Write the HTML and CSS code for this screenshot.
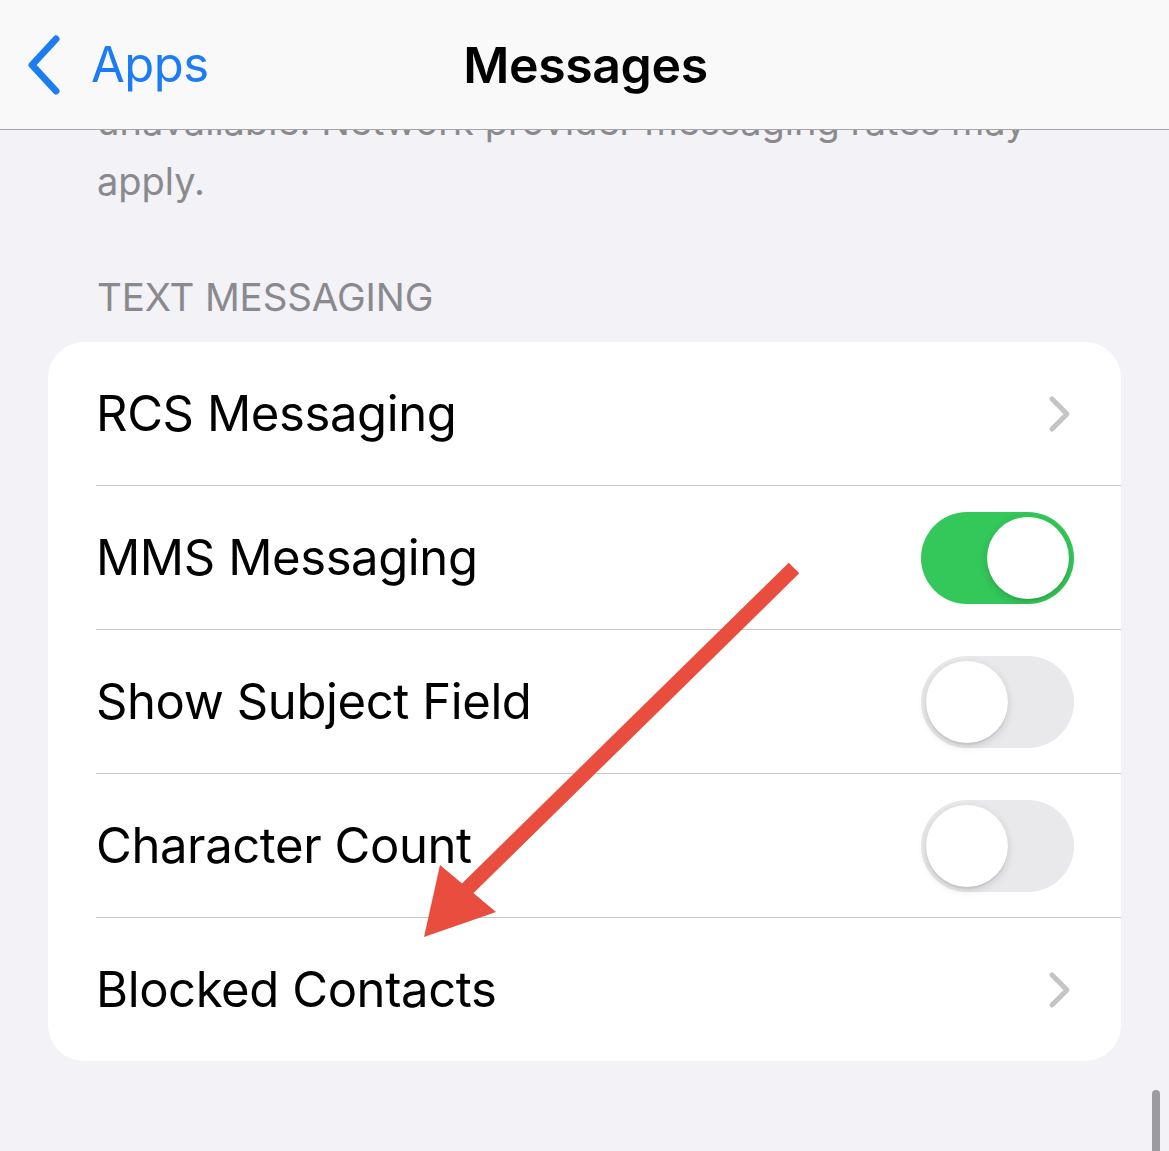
FILE: index.html
```html
<!DOCTYPE html>
<html>
<head>
<meta charset="utf-8">
<link rel="stylesheet" href="styles.css">
</head>
<body>
<div class="screen">
  <header class="navbar">
    <div class="back">
      <svg class="back-chevron" viewBox="0 0 40 60" width="40" height="60"><path d="M32 4 L8 30 L32 56" fill="none" stroke="#1b7cf3" stroke-width="7" stroke-linecap="round" stroke-linejoin="round"/></svg>
      <span class="back-label">Apps</span>
    </div>
    <div class="title">Messages</div>
    <div class="nav-spacer"></div>
  </header>
  <main class="content">
    <p class="footnote">unavailable. Network provider messaging rates may apply.</p>
    <div class="section-header">TEXT MESSAGING</div>
    <div class="card">
      <div class="row"><div class="row-inner"><span class="label">RCS Messaging</span><svg class="chev" viewBox="0 0 24 38" width="24" height="38"><path d="M4 4 L19 19 L4 34" fill="none" stroke="#c4c4c7" stroke-width="5" stroke-linecap="round" stroke-linejoin="round"/></svg></div></div>
      <div class="row"><div class="row-inner sep"><span class="label">MMS Messaging</span><span class="toggle on"><span class="knob"></span></span></div></div>
      <div class="row"><div class="row-inner sep"><span class="label">Show Subject Field</span><span class="toggle"><span class="knob"></span></span></div></div>
      <div class="row"><div class="row-inner sep"><span class="label">Character Count</span><span class="toggle"><span class="knob"></span></span></div></div>
      <div class="row"><div class="row-inner sep"><span class="label">Blocked Contacts</span><svg class="chev" viewBox="0 0 24 38" width="24" height="38"><path d="M4 4 L19 19 L4 34" fill="none" stroke="#c4c4c7" stroke-width="5" stroke-linecap="round" stroke-linejoin="round"/></svg></div></div>
    </div>
  </main>
  <svg class="annotation" viewBox="0 0 1169 1151" width="1169" height="1151">
    <line x1="794" y1="568" x2="466" y2="890" stroke="#e84d3d" stroke-width="15"/>
    <polygon points="424,937 440,865 496,912" fill="#e84d3d"/>
  </svg>
  <div class="scrollbar"></div>
</div>
</body>
</html>
```
FILE: styles.css
```css
html, body {
  margin: 0;
  padding: 0;
}
body {
  width: 1169px;
  height: 1151px;
  overflow: hidden;
  background: #f2f2f7;
  font-family: Inter, "Liberation Sans", sans-serif;
}
.screen {
  position: relative;
  width: 1169px;
  height: 1151px;
  display: flex;
  flex-direction: column;
  overflow: hidden;
}
.navbar {
  height: 129px;
  flex: none;
  background: #f9f9fa;
  border-bottom: 1px solid #a6a6a9;
  display: grid;
  grid-template-columns: 1fr auto 1fr;
  align-items: center;
  position: relative;
  z-index: 2;
}
.back {
  display: flex;
  align-items: center;
  padding-left: 24px;
  gap: 27px;
}
.back-chevron {
  display: block;
}
.back-label {
  color: #1b7cf3;
  font-size: 49px;
  letter-spacing: -0.5px;
}
.title {
  font-size: 50px;
  font-weight: 600;
  color: #000;
  letter-spacing: -0.4px;
  padding-left: 2px;
}
.content {
  flex: 1;
  overflow: hidden;
  padding: 0 48px;
}
.footnote {
  margin: -39px 0 0 49px;
  width: 960px;
  font-size: 38px;
  line-height: 60px;
  color: #8a8a8e;
}
.section-header {
  margin: 64px 0 0 49px;
  font-size: 38.5px;
  line-height: 44px;
  color: #8a8a8e;
  letter-spacing: -0.1px;
}
.card {
  margin-top: 23px;
  background: #fff;
  border-radius: 36px;
  overflow: hidden;
}
.row {
  padding-left: 48px;
}
.row-inner {
  height: 143px;
  display: flex;
  align-items: center;
  justify-content: space-between;
  padding-right: 47px;
}
.row-inner.sep {
  border-top: 1px solid #c8c8cb;
}
.label {
  font-size: 49px;
  color: #000;
  letter-spacing: -0.4px;
}
.chev {
  display: block;
  margin-right: 2px;
}
.toggle {
  width: 153px;
  height: 92px;
  border-radius: 46px;
  background: #e9e9eb;
  display: flex;
  align-items: center;
  padding: 0 5px;
  box-sizing: border-box;
}
.toggle.on {
  background: #34c759;
  justify-content: flex-end;
}
.knob {
  width: 82px;
  height: 82px;
  border-radius: 50%;
  background: #fff;
  box-shadow: 0 3px 8px rgba(0,0,0,0.15), 0 2px 1px rgba(0,0,0,0.06);
}
.annotation {
  position: absolute;
  left: 0;
  top: 0;
  pointer-events: none;
  z-index: 3;
}
.scrollbar {
  position: absolute;
  left: 1152px;
  top: 1090px;
  width: 8px;
  height: 80px;
  border-radius: 4px;
  background: #9c9c9e;
  z-index: 3;
}
```
